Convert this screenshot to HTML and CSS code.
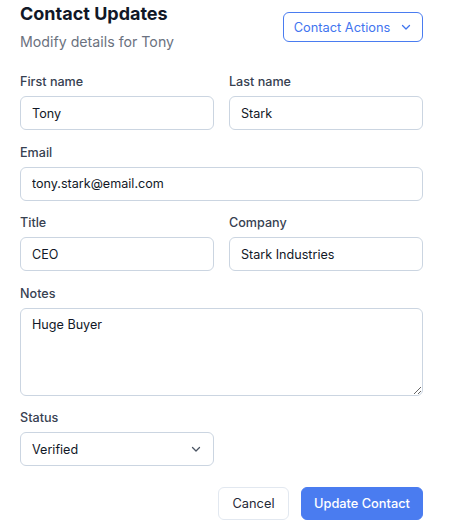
FILE: index.html
```html
<!DOCTYPE html>
<html>
<head>
<meta charset="utf-8">
<link rel="stylesheet" href="styles.css">
</head>
<body>
<div class="panel">
  <div class="header">
    <div>
      <h1 class="title">Contact Updates</h1>
      <p class="subtitle">Modify details for Tony</p>
    </div>
    <button class="actions-btn">Contact Actions
      <svg width="12" height="12" viewBox="0 0 12 12"><path d="M2.5 4.5 6 8l3.5-3.5" fill="none" stroke="currentColor" stroke-width="1.3" stroke-linecap="round" stroke-linejoin="round"/></svg>
    </button>
  </div>
  <form class="form">
    <div class="row two">
      <label class="field"><span class="label">First name</span><input class="input" value="Tony"></label>
      <label class="field"><span class="label">Last name</span><input class="input" value="Stark"></label>
    </div>
    <div class="row">
      <label class="field"><span class="label">Email</span><input class="input" value="tony.stark@email.com"></label>
    </div>
    <div class="row two">
      <label class="field"><span class="label">Title</span><input class="input" value="CEO"></label>
      <label class="field"><span class="label">Company</span><input class="input" value="Stark Industries"></label>
    </div>
    <div class="row">
      <label class="field"><span class="label">Notes</span><textarea class="input textarea">Huge Buyer</textarea></label>
    </div>
    <div class="row two">
      <label class="field"><span class="label">Status</span>
        <span class="select-wrap">
          <select class="input select"><option>Verified</option></select>
          <svg class="chev" width="12" height="12" viewBox="0 0 12 12"><path d="M2.5 4.5 6 8l3.5-3.5" fill="none" stroke="currentColor" stroke-width="1.3" stroke-linecap="round" stroke-linejoin="round"/></svg>
        </span>
      </label>
    </div>
    <div class="buttons">
      <button type="button" class="btn cancel">Cancel</button>
      <button type="button" class="btn primary">Update Contact</button>
    </div>
  </form>
</div>
</body>
</html>
```
FILE: styles.css
```css
* { box-sizing: border-box; }
body {
  margin: 0;
  padding: 0 29px 0 20px;
  font-family: Inter, "Noto Sans", sans-serif;
  background: #fff;
  color: #111827;
}
.panel { width: 403px; }
.header {
  display: flex;
  justify-content: space-between;
  align-items: flex-start;
}
.title {
  margin: 0;
  font-size: 18px;
  line-height: 28px;
  font-weight: 700;
  color: #111827;
}
.subtitle {
  margin: 4px 0 0;
  font-size: 14.2px;
  line-height: 20px;
  color: #6b7280;
}
.actions-btn {
  margin-top: 12px;
  height: 30px;
  width: 140px;
  border: 1px solid #4a7cf0;
  border-radius: 6px;
  background: #fff;
  color: #3f74ef;
  font-family: inherit;
  font-size: 12.8px;
  white-space: nowrap;
  display: flex;
  align-items: center;
  justify-content: center;
  gap: 10px;
  padding: 0;
}
.form {
  margin-top: 20px;
  display: flex;
  flex-direction: column;
  gap: 12.5px;
}
.row { display: grid; grid-template-columns: 1fr; }
.row.two { grid-template-columns: 194px 194px; column-gap: 15px; }
.field { display: flex; flex-direction: column; }
.label {
  font-size: 12.6px;
  line-height: 20px;
  color: #374151;
  font-weight: 500;
  margin-bottom: 4px;
}
.input {
  height: 34px;
  width: 100%;
  border: 1px solid #cbd5e1;
  border-radius: 6px;
  padding: 0 11px;
  font-family: inherit;
  font-size: 12.6px;
  font-weight: 400;
  color: #111827;
  background: #fff;
  outline: none;
}
.textarea {
  height: 88px;
  padding: 7px 11px;
  line-height: 18px;
  resize: vertical;
}
.select-wrap { position: relative; display: block; }
.select { appearance: none; -webkit-appearance: none; }
.chev {
  position: absolute;
  right: 12px;
  top: 11px;
  color: #4b5563;
  pointer-events: none;
}
.buttons {
  margin-top: 8.5px;
  display: flex;
  justify-content: flex-end;
  gap: 12px;
}
.btn {
  height: 33px;
  border-radius: 6px;
  font-family: inherit;
  font-size: 12.8px;
  padding: 0;
  white-space: nowrap;
}
.cancel {
  width: 71px;
  border: 1px solid #e2e8f0;
  background: #fff;
  color: #1f2937;
}
.primary {
  width: 122px;
  border: 1px solid #4a7cf0;
  background: #4a7cf0;
  color: #fff;
  font-weight: 500;
}
```
